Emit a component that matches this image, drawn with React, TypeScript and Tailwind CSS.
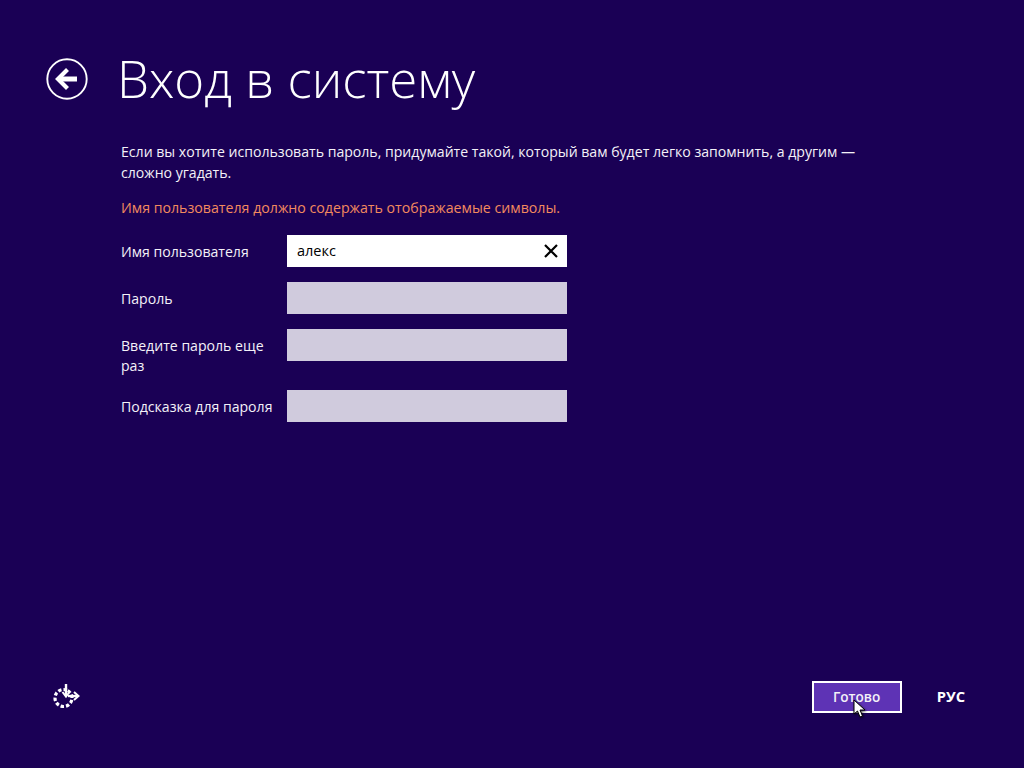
export default function App() {
  const rows = [
    { label: "Имя пользователя", value: "алекс", active: true },
    { label: "Пароль" },
    { label: "Введите пароль еще раз", tall: true },
    { label: "Подсказка для пароля" },
  ];
  return (
    <div className="relative flex h-[768px] w-[1024px] flex-col overflow-hidden bg-[#1a0055] font-['Open_Sans','Noto_Sans',sans-serif] text-white">
      <header className="flex h-[141px] items-start pl-[46px] pt-[46px]">
        <svg viewBox="0 0 42 42" className="mt-[12px] h-[42px] w-[42px]" fill="none" stroke="white">
          <circle cx="21" cy="21" r="19.7" strokeWidth="1.9" />
          <path d="M12 21H31" strokeWidth="5" />
          <path d="M21.5 11.5L12 21L21.5 30.5" strokeWidth="4.2" />
        </svg>
        <h1 className="ml-[29px] mt-[1px] text-[51px] font-light leading-[62px]">Вход в систему</h1>
      </header>
      <main className="pl-[121px]">
        <p className="w-[745px] text-[14.1px] leading-[21px] text-[#f4f2f8]">
          Если вы хотите использовать пароль, придумайте такой, который вам будет легко запомнить, а другим — сложно угадать.
        </p>
        <p className="mt-[14px] text-[14.18px] leading-[21px] text-[#f38a5e]">
          Имя пользователя должно содержать отображаемые символы.
        </p>
        <div className="mt-[17px] flex flex-col gap-[15px]">
          {rows.map((r) => (
            <div key={r.label} className={`flex items-start ${r.tall ? "h-[46px]" : "h-[32px]"}`}>
              <div className="w-[166px] pr-[8px] pt-[7px] text-[14.1px] leading-[20px] text-[#f4f2f8]">{r.label}</div>
              {r.active ? (
                <div className="flex h-[32px] w-[280px] items-center justify-between bg-white pl-[10px] pr-[8px] text-[14.5px] text-black">
                  <span>{r.value}</span>
                  <svg viewBox="0 0 16 16" className="h-[16px] w-[16px]" stroke="black" strokeWidth="2.2" fill="none">
                    <path d="M2 2L14 14M14 2L2 14" />
                  </svg>
                </div>
              ) : (
                <div className="h-[32px] w-[280px] bg-[#d0cbdd]" />
              )}
            </div>
          ))}
        </div>
      </main>
      <footer className="mt-auto flex h-[87px] items-start justify-between pl-[52px] pr-[59px]">
        <svg viewBox="0 0 30 28" className="mt-[1px] h-[28px] w-[30px]" fill="none" stroke="white">
          <circle cx="11.5" cy="16" r="8.5" strokeWidth="3.2" strokeDasharray="3.4 2" transform="rotate(-60 11.5 16)" />
          <path d="M14 2V14" strokeWidth="2.4" />
          <path d="M10.5 10L14 14.5L17.5 10" strokeWidth="2" />
          <path d="M16 14H26" strokeWidth="2.4" />
          <path d="M22 10L26.5 14L22 18" strokeWidth="2" />
        </svg>
        <div className="flex items-start">
          <button className="h-[32px] w-[90px] border-2 border-white bg-[#5e33b5] text-[13.6px] font-semibold text-[#f4f2f8]">Готово</button>
          <span className="ml-[35px] mt-[4px] text-[14.7px] font-bold">РУС</span>
        </div>
      </footer>
      <svg viewBox="0 0 14 20" className="absolute left-[853px] top-[699px] h-[20px] w-[14px]" style={{ filter: "drop-shadow(1px 1px 1px rgba(0,0,0,0.6))" }}>
        <path d="M1 1V15L4.5 12L7 18L9.5 17L7 11H12Z" fill="white" stroke="black" strokeWidth="1" />
      </svg>
    </div>
  );
}
